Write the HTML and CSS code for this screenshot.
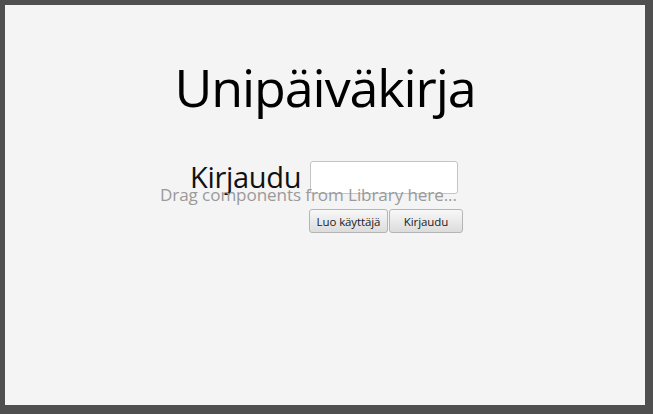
FILE: index.html
```html
<!DOCTYPE html>
<html lang="fi">
<head>
<meta charset="utf-8">
<title>Unipäiväkirja</title>
<link rel="stylesheet" href="styles.css">
</head>
<body>
<div class="frame">
  <h1 class="title">Unipäiväkirja</h1>
  <div class="login">
    <div class="row">
      <span class="label">Kirjaudu</span>
      <input class="field" type="text">
    </div>
    <div class="buttons">
      <button class="btn btn-create">Luo käyttäjä</button>
      <button class="btn btn-login">Kirjaudu</button>
    </div>
    <span class="hint">Drag components from Library here...</span>
  </div>
</div>
</body>
</html>
```
FILE: styles.css
```css
html, body {
  margin: 0;
  padding: 0;
  background: #4f4f4f;
  width: 653px;
  height: 414px;
  overflow: hidden;
}
.frame {
  margin: 5px 8px 9px 5px;
  height: 400px;
  background: #f4f4f4;
  font-family: "Open Sans", "Noto Sans", sans-serif;
  display: flex;
  flex-direction: column;
  align-items: center;
}
.title {
  margin: 56px 0 0 0;
  font-weight: 400;
  font-size: 52px;
  line-height: 52px;
  color: #000;
  letter-spacing: -1.1px;
}
.login {
  position: relative;
  align-self: flex-start;
  margin: 46px 0 0 185px;
  display: flex;
  flex-direction: column;
  align-items: flex-start;
}
.row {
  display: flex;
  align-items: flex-start;
  gap: 9px;
}
.label {
  font-size: 29px;
  line-height: 36px;
  color: #111;
  letter-spacing: -0.3px;
}
.field {
  width: 148px;
  height: 33px;
  box-sizing: border-box;
  border: 1px solid #c4c4c4;
  border-radius: 3px;
  background: #fff;
  margin: 2px 0 0 0;
  padding: 0 6px;
}
.buttons {
  display: flex;
  gap: 1px;
  margin: 14px 0 0 119px;
}
.btn {
  height: 24px;
  box-sizing: border-box;
  margin: 0;
  padding: 0;
  white-space: nowrap;
  text-align: center;
  font-family: "Open Sans", sans-serif;
  font-size: 11.5px;
  letter-spacing: -0.1px;
  color: #1a1a1a;
  border: 1px solid #b5b5b5;
  border-radius: 3px;
  background: linear-gradient(#f8f8f8, #dcdcdc);
}
.btn-create {
  width: 79px;
}
.btn-login {
  width: 74px;
}
.hint {
  position: absolute;
  left: -30px;
  top: 26px;
  font-size: 17.1px;
  line-height: 20px;
  color: #9a9a9a;
  white-space: nowrap;
  letter-spacing: -0.1px;
}
```
